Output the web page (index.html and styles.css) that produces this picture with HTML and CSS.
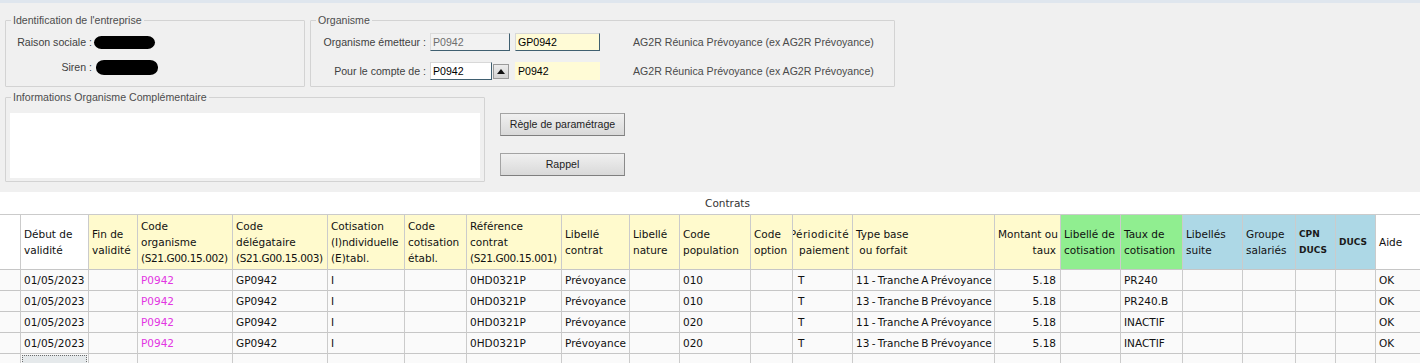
FILE: index.html
```html
<!DOCTYPE html>
<html lang="fr">
<head>
<meta charset="utf-8">
<title>Contrats</title>
<link rel="stylesheet" href="styles.css">
</head>
<body>
<div class="topbar"></div>
<div class="panel">
  <div class="row-top">
    <fieldset class="group ident">
      <legend>Identification de l'entreprise</legend>
      <div class="ident-rows">
        <div class="ident-row"><span class="lbl lbl-ident">Raison sociale :</span><span class="redact redact-1"></span></div>
        <div class="ident-row"><span class="lbl lbl-ident">Siren :</span><span class="redact redact-2"></span></div>
      </div>
    </fieldset>
    <fieldset class="group org">
      <legend>Organisme</legend>
      <div class="org-rows">
        <div class="org-row">
          <span class="lbl lbl-org">Organisme émetteur :</span>
          <div class="field field-disabled w-80">P0942</div>
          <div class="field field-yellow w-85 ml-5">GP0942</div>
          <span class="org-name">AG2R Réunica Prévoyance (ex AG2R Prévoyance)</span>
        </div>
        <div class="org-row">
          <span class="lbl lbl-org">Pour le compte de :</span>
          <div class="field field-white w-62">P0942</div>
          <div class="spin"><svg width="8" height="5" viewBox="0 0 8 5"><path d="M0 5 L4 0 L8 5 Z" fill="#111"/></svg></div>
          <div class="field field-yellow-flat w-85">P0942</div>
          <span class="org-name">AG2R Réunica Prévoyance (ex AG2R Prévoyance)</span>
        </div>
      </div>
    </fieldset>
  </div>
  <div class="row-mid">
    <fieldset class="group info">
      <legend>Informations Organisme Complémentaire</legend>
      <div class="info-box"></div>
    </fieldset>
    <div class="buttons">
      <div class="btn">Règle de paramétrage</div>
      <div class="btn">Rappel</div>
    </div>
  </div>
</div>
<div class="grid-area">
  <div class="caption">Contrats</div>
  <table class="grid">
    <colgroup>
      <col style="width:21px"><col style="width:68px"><col style="width:49px"><col style="width:95px"><col style="width:95px"><col style="width:77px"><col style="width:62px"><col style="width:95px"><col style="width:68px"><col style="width:50px"><col style="width:71px"><col style="width:42px"><col style="width:60px"><col style="width:142px"><col style="width:66px"><col style="width:60px"><col style="width:62px"><col style="width:60px"><col style="width:53px"><col style="width:40px"><col style="width:40px"><col style="width:50px">
    </colgroup>
    <thead>
      <tr>
        <th></th>
        <th>Début de<br>validité</th>
        <th class="y">Fin de<br>validité</th>
        <th class="y">Code<br>organisme<br><span class="code">(S21.G00.15.002)</span></th>
        <th class="y">Code<br>délégataire<br><span class="code">(S21.G00.15.003)</span></th>
        <th class="y">Cotisation<br><span class="tight">(I)ndividuelle</span><br>(E)tabl.</th>
        <th class="y">Code<br>cotisation<br>établ.</th>
        <th class="y">Référence<br>contrat<br><span class="code">(S21.G00.15.001)</span></th>
        <th class="y">Libellé<br>contrat</th>
        <th class="y">Libellé<br>nature</th>
        <th class="y">Code<br>population</th>
        <th class="y">Code<br>option</th>
        <th class="y right-clip"><div class="rc"><span class="wide">Périodicité</span><span>&nbsp;paiement</span></div></th>
        <th class="y">Type base<br>&nbsp;ou forfait</th>
        <th class="y r">Montant ou<br>taux</th>
        <th class="g">Libellé de<br>cotisation</th>
        <th class="g">Taux de<br>cotisation</th>
        <th class="b">Libellés<br>suite</th>
        <th class="b">Groupe<br>salariés</th>
        <th class="b bold">CPN<br>DUCS</th>
        <th class="b bold">DUCS</th>
        <th>Aide</th>
      </tr>
    </thead>
    <tbody>
      <tr>
        <td></td><td>01/05/2023</td><td></td><td class="mag">P0942</td><td>GP0942</td><td>I</td><td></td><td>0HD0321P</td><td>Prévoyance</td><td></td><td>010</td><td></td><td class="per">T</td><td class="tb">11 - Tranche A Prévoyance</td><td class="r">5.18</td><td></td><td>PR240</td><td></td><td></td><td></td><td></td><td>OK</td>
      </tr>
      <tr>
        <td></td><td>01/05/2023</td><td></td><td class="mag">P0942</td><td>GP0942</td><td>I</td><td></td><td>0HD0321P</td><td>Prévoyance</td><td></td><td>010</td><td></td><td class="per">T</td><td class="tb">13 - Tranche B Prévoyance</td><td class="r">5.18</td><td></td><td>PR240.B</td><td></td><td></td><td></td><td></td><td>OK</td>
      </tr>
      <tr>
        <td></td><td>01/05/2023</td><td></td><td class="mag">P0942</td><td>GP0942</td><td>I</td><td></td><td>0HD0321P</td><td>Prévoyance</td><td></td><td>020</td><td></td><td class="per">T</td><td class="tb">11 - Tranche A Prévoyance</td><td class="r">5.18</td><td></td><td>INACTIF</td><td></td><td></td><td></td><td></td><td>OK</td>
      </tr>
      <tr>
        <td></td><td>01/05/2023</td><td></td><td class="mag">P0942</td><td>GP0942</td><td>I</td><td></td><td>0HD0321P</td><td>Prévoyance</td><td></td><td>020</td><td></td><td class="per">T</td><td class="tb">13 - Tranche B Prévoyance</td><td class="r">5.18</td><td></td><td>INACTIF</td><td></td><td></td><td></td><td></td><td>OK</td>
      </tr>
      <tr>
        <td></td><td class="focus"><div class="focus-box"></div></td><td></td><td></td><td></td><td></td><td></td><td></td><td></td><td></td><td></td><td></td><td></td><td></td><td></td><td></td><td></td><td></td><td></td><td></td><td></td><td></td>
      </tr>
    </tbody>
  </table>
</div>
</body>
</html>
```
FILE: styles.css
```css
* { box-sizing: border-box; }
html, body { margin: 0; padding: 0; }
body {
  width: 1420px;
  height: 363px;
  overflow: hidden;
  background: #f0f0f0;
  font-family: "Liberation Sans", Arial, sans-serif;
  font-size: 10.6px;
  color: #3c3c3c;
}
.topbar { height: 3px; background: #dfe6ee; }
.panel { height: 189px; padding: 10px 0 0 5px; }
.row-top { display: flex; gap: 5px; }
.row-mid { display: flex; margin-top: 3px; }

fieldset.group {
  margin: 0;
  padding: 0;
  min-width: 0;
  border: 1px solid #d3d3d3;
  border-radius: 1px;
}
fieldset.group legend {
  margin-left: 5px;
  padding: 0 2px;
  line-height: 14px;
  color: #4d4d4d;
}
.ident { width: 300px; height: 74px; }
.org { width: 585px; height: 74px; }
.info { width: 480px; height: 92px; }

.ident-rows { display: flex; flex-direction: column; gap: 7px; padding-top: 6px; }
.ident-row { display: flex; align-items: center; height: 18px; }
.lbl { white-space: nowrap; color: #404040; }
.lbl-ident { width: 86px; text-align: right; }
.redact { display: block; background: #000; border-radius: 8px / 7px; }
.redact-1 { width: 61px; height: 13px; margin-left: 2px; }
.redact-2 { width: 62px; height: 15px; margin-left: 4px; margin-top: 1px; }

.org-rows { display: flex; flex-direction: column; gap: 11px; padding-top: 6px; }
.org-row { display: flex; align-items: center; height: 18px; }
.lbl-org { width: 115px; text-align: right; margin-right: 4px; }
.field {
  height: 18px;
  line-height: 16px;
  padding: 0 2px;
  white-space: nowrap;
  color: #000;
  border: 1px solid #d8d8d8;
  border-right-color: #3f5f70;
  border-bottom-color: #3f5f70;
}
.field-disabled { background: #f2f2f2; color: #6e6e6e; border-top-color: #dcdcdc; border-left-color: #dcdcdc; }
.field-yellow { background: #fffbd6; }
.field-white { background: #fff; }
.field-yellow-flat { background: #fffbd6; border-color: #fffbd6; margin-left: 6px; }
.w-80 { width: 80px; }
.w-85 { width: 85px; }
.w-62 { width: 62px; }
.ml-5 { margin-left: 5px; }
.spin {
  width: 16px;
  height: 15px;
  margin-left: 1px;
  display: flex;
  align-items: center;
  justify-content: center;
  background: linear-gradient(#ececec, #d2d2d2);
  border: 1px solid #9a9a9a;
}
.org-name { margin-left: 33px; color: #4a4a4a; white-space: nowrap; }

.info-box { margin: 9px 0 0 4px; width: 470px; height: 65px; background: #fff; }
.buttons { display: flex; flex-direction: column; gap: 17px; margin-left: 15px; padding-top: 23px; }
.btn {
  width: 125px;
  height: 23px;
  line-height: 21px;
  text-align: center;
  color: #1e1e1e;
  background: linear-gradient(#f0f0f0, #d9d9d9);
  border: 1px solid #a3a3a3;
  border-bottom-color: #7f7f7f;
  border-right-color: #8a8a8a;
}

.grid-area { background: #fff; height: 171px; overflow: hidden; }
.caption {
  height: 22px;
  line-height: 22px;
  padding-left: 35px;
  text-align: center;
  font-family: "DejaVu Sans", Verdana, sans-serif;
  font-size: 10.5px;
  color: #333;
}
table.grid {
  table-layout: fixed;
  width: 1426px;
  border-collapse: separate;
  border-spacing: 0;
  font-family: "DejaVu Sans", Verdana, sans-serif;
  font-size: 10.5px;
  color: #111;
}
.grid th, .grid td {
  border-right: 1px solid #cbcbcb;
  border-bottom: 1px solid #c6c6c6;
  padding: 0 2px 0 3px;
  white-space: nowrap;
  overflow: hidden;
  text-align: left;
}
.grid th {
  font-weight: normal;
  height: 56px;
  line-height: 16px;
  vertical-align: middle;
  background: #fff;
  border-top: 1px solid #cbcbcb;
}
.grid td { height: 21px; line-height: 19px; background: #fafafa; }
.grid th.y { background: #fffacd; }
.grid th.g { background: #90ee90; }
.grid th.b { background: #add8e6; }
.grid th.bold { font-weight: bold; font-size: 9px; color: #1a1a1a; }
.grid .code { letter-spacing: -0.4px; }
.grid .tight { letter-spacing: -0.1px; }
.grid .wide { letter-spacing: 0.4px; }
.grid .r { text-align: right; padding-right: 4px; }
.grid td.mag { color: #e236e2; }
.grid td.per { padding-left: 5px; }
.grid td.tb { word-spacing: -1px; }
.right-clip .rc { display: flex; flex-direction: column; align-items: flex-end; padding-right: 1px; }
.grid td.focus { padding: 1px; }
.focus-box { height: 19px; border: 1px dotted #6b6b6b; background: #e5e9eb; }
```
